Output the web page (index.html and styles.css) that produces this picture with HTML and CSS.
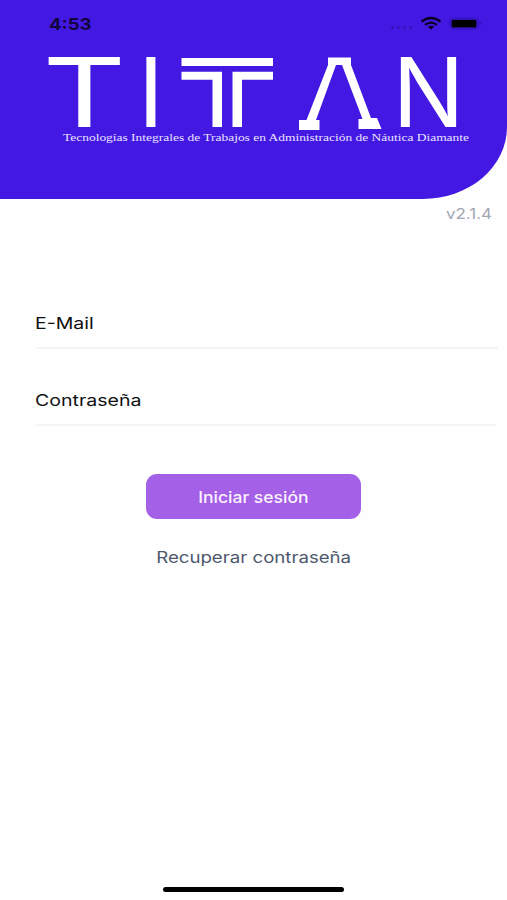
FILE: index.html
```html
<!DOCTYPE html>
<html lang="es">
<head>
    <meta charset="UTF-8">
    <meta name="viewport" content="width=device-width, initial-scale=1.0">
    <title>TITTAN</title>
    <link rel="stylesheet" href="styles.css">
</head>
<body>
    <header class="hero">
        <div class="status-bar">
            <span class="time">4:53</span>
            <svg class="status-icons" width="92" height="18" viewBox="0 0 92 18">
                <g fill="#2d10a8">
                    <circle cx="2.500" cy="12.500" r="1.2"/>
                    <circle cx="8.500" cy="12.500" r="1.2"/>
                    <circle cx="14.500" cy="12.500" r="1.2"/>
                    <circle cx="20.500" cy="12.500" r="1.2"/>
                </g>
                <!-- wifi -->
                <g fill="none" stroke="#08021f" stroke-width="2.3">
                    <path d="M31.5 6.6Q41 -0.6 50.500 6.600"/>
                    <path d="M35 9.900Q41 5.400 47 9.900"/>
                </g>
                <path d="M37.800 11.700Q41 9.600 44.200 11.700L41 14.500Z" fill="#08021f"/>
                <!-- battery -->
                <rect x="59.700" y="3" width="29" height="11" rx="3.500" fill="none" stroke="#3411b8" stroke-width="1"/>
                <rect x="61.500" y="4.700" width="25" height="7.800" rx="1.500" fill="#000"/>
                <path d="M90 7q2 1.500 0 3z" fill="#2d10a8"/>
            </svg>
        </div>
        <svg class="logo" width="507" height="100" viewBox="0 0 507 100" fill="#fff">
            <text class="logo-letter" x="42.500" y="82" textLength="83.500" lengthAdjust="spacingAndGlyphs">T</text>
            <text class="logo-letter" x="138" y="82">I</text>
            <!-- double T columns -->
            <g>
                <rect x="181.500" y="13" width="91.500" height="8"/>
                <path d="M181.500 26.700H222V82h-9.500V34.700h-31z"/>
                <path d="M273 26.700H232.500V82h9.500V34.700h31z"/>
            </g>
            <!-- compass style pillar -->
            <path d="M328 12.500H351V20L371 73H377L381.500 84H358.500V74H362.500L342 20H336L316 75H319.500V85H299V75H306.500L328 20Z"/>
            <text class="logo-letter" x="392.500" y="82" textLength="72" lengthAdjust="spacingAndGlyphs">N</text>
            <text class="tagline" x="63" y="96" textLength="406" lengthAdjust="spacingAndGlyphs">Tecnologías Integrales de Trabajos en Administración de Náutica Diamante</text>
        </svg>
    </header>

    <div class="version"><span>v2.1.4</span></div>

    <main class="login">
        <div class="field email"><label>E-Mail</label></div>
        <div class="field password"><label>Contraseña</label></div>
        <button class="submit"><span>Iniciar sesión</span></button>
        <a class="recover">Recuperar contraseña</a>
    </main>

    <div class="home-indicator"></div>
</body>
</html>
```

FILE: styles.css
```css
* { box-sizing: border-box; }
body { margin: 0; height: 900px; display: flex; flex-direction: column; background: #fefefe; font-family: Inter, "Liberation Sans", sans-serif; font-size: 16px; overflow: hidden; }

.hero { height: 199px; flex: none; background: #4318e3; border-bottom-right-radius: 84px 72px; }
.status-bar { height: 45px; padding: 15px 25px 0 49px; display: flex; justify-content: space-between; align-items: flex-start; }
.time { font-size: 16px; line-height: 18px; font-weight: 700; color: #10053d; transform: scaleX(1.16); transform-origin: left; }
.status-icons { display: block; }
.logo { display: block; overflow: visible; }
.logo-letter { font-family: Inter, sans-serif; font-size: 96px; font-weight: 400; }
.tagline { font-family: "Liberation Serif", serif; font-size: 11px; fill: #e9e3ff; }

.version { padding: 5px 15px 0 0; height: 104px; text-align: right; font-size: 14px; line-height: 20px; color: #a2a6b2; }
.version span { display: inline-block; transform: scaleX(1.21); transform-origin: right; }

.login { display: flex; flex-direction: column; }
.field { margin-left: 36px; border-bottom: 2px solid #f4f4f4; color: #111; }
.field label { display: inline-block; margin-left: -1px; line-height: 20px; transform: scaleX(1.22); transform-origin: left; }
.email { height: 46px; margin-right: 9px; padding-top: 10px; }
.password { height: 77px; margin-right: 11px; padding-top: 41px; }
.submit { align-self: center; width: 215px; height: 45px; margin-top: 48px; padding: 0; border: none; border-radius: 11px; background: #a460e6; color: #fbf2ff; font-family: inherit; font-size: 16px; font-weight: 500; }
.submit span { display: inline-block; transform: scaleX(1.095); }
.recover { align-self: center; margin-top: 28px; line-height: 20px; color: #4d586c; transform: scaleX(1.165); }

.home-indicator { width: 181px; height: 5px; margin: auto auto 8px; border-radius: 3px; background: #000; }
```
